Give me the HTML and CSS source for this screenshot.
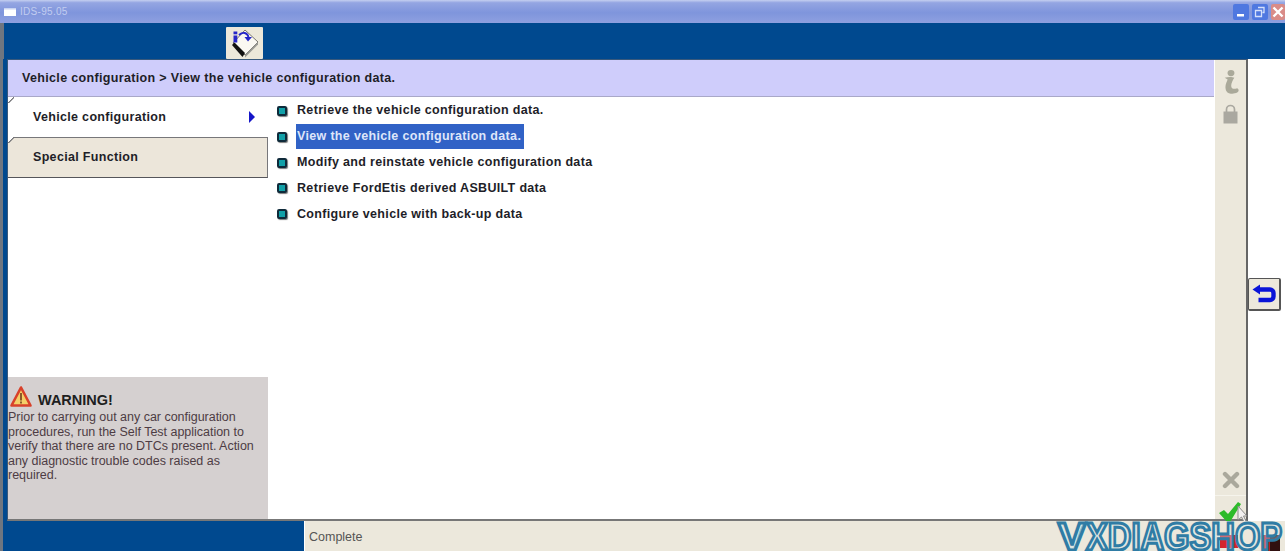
FILE: index.html
```html
<!DOCTYPE html>
<html lang="en">
<head>
<meta charset="utf-8">
<title>IDS-95.05</title>
<link rel="stylesheet" href="styles.css">
</head>
<body>
<div class="app">
  <header class="titlebar">
    <svg class="win-icon" width="12" height="8" viewBox="0 0 12 8"><rect width="12" height="8" fill="#fff"/><rect width="12" height="1.500" fill="#c9d4f2"/></svg>
    <span class="title-text">IDS-95.05</span>
    <div class="win-btns">
      <span class="win-btn"><svg width="14" height="14" viewBox="0 0 14 14"><rect x="3" y="9" width="7" height="2.500" fill="#fff"/></svg></span>
      <span class="win-btn"><svg width="14" height="14" viewBox="0 0 14 14"><path d="M5 2.500h6v5H9.500M2.500 5.500h6v6h-6z" fill="none" stroke="#d5e0fa" stroke-width="1.300"/></svg></span>
      <span class="win-btn close"><svg width="14" height="14" viewBox="0 0 14 14"><path d="M2.500 2.500l9 9M11.500 2.500l-9 9" stroke="#fff" stroke-width="2.400"/></svg></span>
    </div>
  </header>
  <div class="toolbar">
    <span class="tool-btn">
      <svg width="37" height="32" viewBox="0 0 37 32">
        <path d="M19 3L32 15 19 28 7 16z" fill="#faf8f2" stroke="#77756e" stroke-width="1"/>
        <path d="M19 28L32 15v2.500L19 30.500z" fill="#9a9a94"/>
        <path d="M6 18L8.500 15.500 19 26l-2.500 4z" fill="#111"/>
        <rect x="7.500" y="8.500" width="3.800" height="7" fill="#2626c8"/>
        <rect x="7.500" y="4.500" width="3.800" height="2.800" fill="#2626c8"/>
        <path d="M13 8c4-3.500 8-2.500 9.500 2" fill="none" stroke="#2626c8" stroke-width="1.900"/>
        <path d="M18.500 10h7.500l-4 4.500z" fill="#2626c8"/>
      </svg>
    </span>
  </div>
  <div class="workspace">
    <div class="panel">
      <div class="panel-main">
        <div class="crumb">Vehicle configuration &gt; View the vehicle configuration data.</div>
        <div class="content">
          <aside class="sidebar">
            <div class="tab tab-active"><span>Vehicle configuration</span><i class="tab-arrow"></i></div>
            <div class="tab tab-idle"><span>Special Function</span></div>
            <div class="warning">
              <div class="warning-head">
                <svg width="24" height="24" viewBox="0 0 24 24"><path d="M12 2.500L21.500 20.500H2.500z" fill="#f4cf68" stroke="#d8412a" stroke-width="2.600" stroke-linejoin="round"/><rect x="11" y="8" width="2" height="7.500" fill="#8a5a2a"/><rect x="11" y="16.500" width="2" height="2" fill="#8a5a2a"/></svg>
                <strong>WARNING!</strong>
              </div>
              <p>Prior to carrying out any car configuration procedures, run the Self Test application to verify that there are no DTCs present. Action any diagnostic trouble codes raised as required.</p>
            </div>
          </aside>
          <ul class="menu">
            <li><span class="menu-label">Retrieve the vehicle configuration data.</span></li>
            <li><span class="menu-label selected">View the vehicle configuration data.</span></li>
            <li><span class="menu-label">Modify and reinstate vehicle configuration data</span></li>
            <li><span class="menu-label">Retrieve FordEtis derived ASBUILT data</span></li>
            <li><span class="menu-label">Configure vehicle with back-up data</span></li>
          </ul>
        </div>
      </div>
      <div class="rail">
        <span class="rail-cell rail-info">
          <svg width="17" height="24" viewBox="0 0 17 25"><ellipse cx="9" cy="3.200" rx="3.600" ry="3.200" fill="#aaa99a"/><path d="M2.500 8c3-1 8-1 10 0-2 3-4 7-3 10 1 2 3 2 6 1 2 1 2 3 0 4.500-4 2-11 2-12-3.500-1-4 1-7 2-10z" fill="#aaa99a"/></svg>
        </span>
        <span class="rail-cell rail-lock">
          <svg width="15" height="20" viewBox="0 0 15 20"><path d="M3.500 8V5.500a4 4 0 0 1 8 0V8" fill="none" stroke="#aaa8a0" stroke-width="1.700"/><rect x="0.500" y="7.500" width="14" height="12" fill="#aaa8a0"/></svg>
        </span>
        <span class="rail-gap"></span>
        <span class="rail-cell rail-cancel">
          <svg width="18" height="18" viewBox="0 0 18 18"><path d="M3 3l12 12M15 3L3 15" stroke="#aaa89c" stroke-width="4.400" stroke-linecap="round"/></svg>
        </span>
        <span class="rail-cell rail-ok">
          <svg class="check" width="24" height="22" viewBox="0 0 24 22"><path d="M1 12l5-3 4 4L20 1l3 2-11 18h-3z" fill="#2dbb2a"/></svg>
          <svg class="cursor" width="11" height="18" viewBox="0 0 11 18"><path d="M1 1v14l3.500-3 2.500 5 2-1-2.500-5H10z" fill="#f2f0f0" stroke="#8a8a8a"/></svg>
        </span>
      </div>
    </div>
    <div class="side-actions">
      <span class="back-btn">
        <svg width="24" height="20" viewBox="0 0 24 20"><path d="M6 5.500h12a3.500 3.500 0 0 1 3.500 3.500v3.500a3.500 3.500 0 0 1-3.500 3.500H6.500" fill="none" stroke="#0a14d8" stroke-width="4.400"/><path d="M0.500 5.500L8 0.500v10z" fill="#0a14d8"/></svg>
      </span>
    </div>
  </div>
  <footer class="statusrow">
    <div class="status-blue"></div>
    <div class="status-text">Complete</div>
    <i class="blot blot-red"></i>
    <i class="blot blot-dark"></i>
    <div class="brand">
      <span class="brand-v">V</span>
      <svg class="brand-swoosh" width="14" height="28" viewBox="0 0 14 28"><path d="M1 27C6 22 5 7 13 1" fill="none" stroke="#6fb4c8" stroke-width="1.800"/></svg>
      <span class="brand-x">XDIAGSHOP</span>
    </div>
  </footer>
</div>
</body>
</html>
```
FILE: styles.css
```css
* { box-sizing: border-box; }
*::before { box-sizing: border-box; }
html, body { margin: 0; padding: 0; }
body { width: 1285px; height: 551px; overflow: hidden; background: #fff; font-family: "Liberation Sans", Arial, sans-serif; }
.app { width: 1285px; height: 551px; display: flex; flex-direction: column; }

.titlebar { height: 23px; flex: none; display: flex; align-items: center; padding: 0 0 0 4px; background: linear-gradient(#c4cff0 0, #94a5e2 12%, #7f95dc 55%, #8ea0e0 100%); }
.win-icon { flex: none; margin-right: 4px; }
.title-text { font-size: 10px; letter-spacing: .3px; color: #c2cdf0; }
.win-btns { margin-left: auto; display: flex; gap: 3px; }
.win-btn { width: 16px; height: 16px; display: flex; align-items: center; justify-content: center; border-radius: 2px; background: #4f78e0; }
.win-btn.close { background: #d98c88; width: 14px; }

.toolbar { height: 36px; flex: none; background: #00498f; border-left: 4px solid #6f7680; padding-left: 222px; }
.tool-btn { display: flex; width: 37px; height: 32px; margin-top: 4px; align-items: center; justify-content: center; background: #ece8da; border-radius: 1px; }

.workspace { height: 462px; flex: none; display: flex; background: linear-gradient(90deg, #6f7680 0, #6f7680 3px, #00498f 3px, #00498f 7px, #fff 7px); padding-left: 7px; }
.panel { width: 1241px; flex: none; display: flex; border-top: 1px solid #39597c; border-bottom: 2px solid #777; border-right: 2px solid #666; border-left: 1px solid #39597c; }
.panel-main { flex: 1; min-width: 0; display: flex; flex-direction: column; }
.crumb { height: 37px; flex: none; background: #cfcdfb; border-bottom: 1px solid #a9a8c8; display: flex; align-items: center; padding-left: 14px; margin-right: 1px; font-size: 12.500px; font-weight: 700; color: #1e1e28; letter-spacing: .34px; }
.content { flex: 1; display: flex; min-height: 0; }

.sidebar { width: 260px; flex: none; display: flex; flex-direction: column; }
.tab { display: flex; align-items: center; padding-left: 25px; font-size: 12.500px; font-weight: 700; color: #1e1e28; letter-spacing: .32px; position: relative; }
.tab::before { content: ""; position: absolute; left: 0; top: -1px; width: 6px; height: 6px; background: linear-gradient(135deg, #fff 0, #fff 44%, #77777a 45%, #77777a 58%, transparent 59%); }
.tab-active { height: 40px; background: #fff; padding-right: 13px; justify-content: space-between; }
.tab-active::before { top: 0; }
.tab-arrow { width: 0; height: 0; border-left: 6px solid #1616c8; border-top: 6px solid transparent; border-bottom: 6px solid transparent; }
.tab-idle { height: 41px; padding-bottom: 1px; background: #ece6da; border-top: 1px solid #77777a; border-bottom: 1px solid #55555a; border-right: 1px solid #77777a; }
.warning { margin-top: auto; height: 142px; background: #d5d0d0; padding-top: 4px; }
.warning-head { display: flex; align-items: flex-end; height: 28px; padding-left: 1px; gap: 5px; }
.warning-head strong { font-size: 14.500px; color: #201e20; line-height: 17px; }
.warning p { margin: 0; padding-top: 1px; font-size: 12.500px; line-height: 14.600px; color: #4d3c44; letter-spacing: -.02px; }

.menu { list-style: none; margin: 0; padding: 0.600px 0 0 7px; flex: 1; }
.menu li { height: 25.800px; display: flex; align-items: center; font-size: 12.500px; font-weight: 700; color: #1e1e28; letter-spacing: .33px; }
.menu li::before { content: ""; flex: none; width: 10px; height: 10px; margin: 1px 9px 0 2px; background: #12a0a8; border: 2px solid #0f2a3a; border-radius: 2px; box-shadow: 1px 1px 1px #7a7a7a; }
.menu-label { display: block; line-height: 22px; white-space: nowrap; padding-left: 1px; }
.selected { background: #3162c6; color: #dfe6fa; padding-right: 3px; line-height: 25px; }

.rail { width: 31px; flex: none; background: #ece8dc; display: flex; flex-direction: column; align-items: center; }
.rail-cell { width: 31px; display: flex; align-items: center; justify-content: center; position: relative; }
.rail-info { height: 44px; }
.rail-lock { height: 20px; }
.rail-cancel { height: 30px; }
.rail-gap { flex: 1; }
.rail-ok { height: 24px; border-top: 1px solid #f6f4ec; }
.check { position: absolute; left: 3px; top: 5px; }
.cursor { position: absolute; left: 22px; top: 9px; }

.side-actions { flex: 1; display: flex; align-items: flex-start; padding-top: 219px; }
.back-btn { width: 33px; height: 33px; display: flex; align-items: center; justify-content: center; background: #ece8dc; border: 1px solid #555; border-bottom-width: 2px; border-right-width: 2px; border-radius: 2px; }

.statusrow { height: 30px; flex: none; display: flex; position: relative; background: #ece8dc; }
.status-blue { width: 304px; flex: none; background: #00498f; border-left: 3px solid #6f7680; }
.status-text { flex: 1; padding: 9px 0 0 4px; font-size: 12.500px; color: #555; border-left: 1px solid #fff; }
.blot { position: absolute; top: 14px; }
.blot-red { left: 1220px; width: 18px; height: 13px; background: #d4262c; }
.blot-dark { left: 1262px; width: 18px; height: 16px; background: linear-gradient(90deg, #c02028 0, #c02028 45%, #301010 46%); }
.brand { position: absolute; left: 1058px; top: 0; height: 30px; display: flex; align-items: baseline; font-size: 38px; font-weight: 700; line-height: 32px; color: rgba(205, 228, 238, .4); -webkit-text-stroke: 3px #2f7ca5; white-space: nowrap; }
.brand-v { transform: scaleX(1.100); transform-origin: 0 100%; margin-right: -10px; }
.brand-swoosh { align-self: flex-end; margin-bottom: 2px; margin-right: -1px; }
.brand-x { display: inline-block; transform: scaleX(.86); transform-origin: 0 100%; margin-right: -34px; }
```
